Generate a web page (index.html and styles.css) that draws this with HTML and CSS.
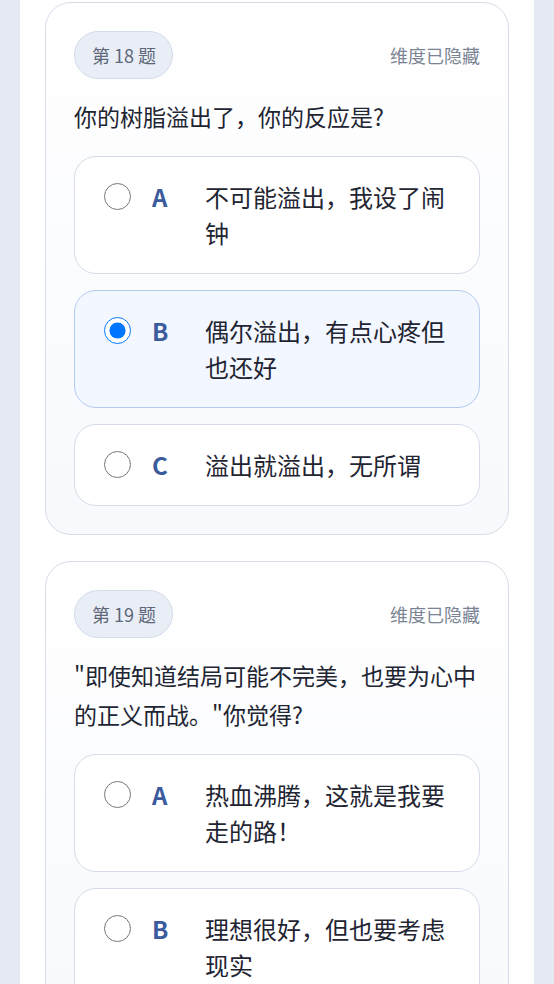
FILE: index.html
```html
<!DOCTYPE html>
<html lang="zh-CN">
<head>
<meta charset="utf-8">
<title>测验</title>
<link rel="stylesheet" href="styles.css">
</head>
<body>
<main class="panel">
  <section class="card">
    <div class="card-head">
      <span class="badge">第 18 题</span>
      <span class="hint">维度已隐藏</span>
    </div>
    <p class="question">你的树脂溢出了，你的反应是?</p>
    <div class="options">
      <label class="option">
        <input type="radio" name="q18" class="radio">
        <span class="letter">A</span>
        <span class="text">不可能溢出，我设了闹钟</span>
      </label>
      <label class="option selected">
        <input type="radio" name="q18" class="radio" checked>
        <span class="letter">B</span>
        <span class="text">偶尔溢出，有点心疼但也还好</span>
      </label>
      <label class="option">
        <input type="radio" name="q18" class="radio">
        <span class="letter">C</span>
        <span class="text">溢出就溢出，无所谓</span>
      </label>
    </div>
  </section>

  <section class="card">
    <div class="card-head">
      <span class="badge">第 19 题</span>
      <span class="hint">维度已隐藏</span>
    </div>
    <p class="question">"即使知道结局可能不完美，也要为心中的正义而战。"你觉得?</p>
    <div class="options">
      <label class="option">
        <input type="radio" name="q19" class="radio">
        <span class="letter">A</span>
        <span class="text">热血沸腾，这就是我要走的路！</span>
      </label>
      <label class="option">
        <input type="radio" name="q19" class="radio">
        <span class="letter">B</span>
        <span class="text">理想很好，但也要考虑现实</span>
      </label>
    </div>
  </section>
</main>
</body>
</html>
```

FILE: styles.css
```css
html, body {
  margin: 0;
  height: 100%;
  overflow: hidden;
}

body {
  background: #e4e9f3;
  font-family: "Noto Sans CJK SC", "Noto Sans", sans-serif;
  color: #1f2532;
}

.panel {
  margin: 0 20px;
  min-height: 100%;
  background: #ffffff;
  padding: 2px 25px 0;
  display: flex;
  flex-direction: column;
  gap: 26px;
  box-sizing: border-box;
}

.card {
  border: 1px solid #d5dce8;
  border-radius: 26px;
  background: linear-gradient(180deg, #ffffff 0%, #f7f9fd 100%);
  padding: 28px 28px 28px;
}

.card-head {
  display: flex;
  justify-content: space-between;
  align-items: center;
  height: 48px;
  margin-bottom: 18px;
}

.badge {
  display: inline-flex;
  align-items: center;
  height: 46px;
  padding: 0 16px 0 17px;
  border: 1px solid #d3dcea;
  border-radius: 24px;
  background: #e9eef6;
  color: #5d6778;
  font-size: 18px;
}

.hint {
  color: #7a8494;
  font-size: 18px;
}

.question {
  margin: 0 0 20px;
  font-size: 23px;
  line-height: 39px;
  color: #1e2533;
}

.options {
  display: flex;
  flex-direction: column;
  gap: 16px;
}

.option {
  display: flex;
  align-items: flex-start;
  gap: 21px;
  padding: 22px 22px 22px 29px;
  border: 1px solid #d5dce8;
  border-radius: 22px;
  background: #ffffff;
}

.option.selected {
  background: #f3f7ff;
  border-color: #b5caee;
}

.radio {
  flex: none;
  width: 27px;
  height: 27px;
  margin: 4px 0 0;
}

.letter {
  flex: none;
  width: 32px;
  font-size: 24px;
  line-height: 36px;
  font-weight: 700;
  color: #3c5b9c;
}

.text {
  font-size: 24px;
  line-height: 36px;
  color: #1f2532;
}
```
